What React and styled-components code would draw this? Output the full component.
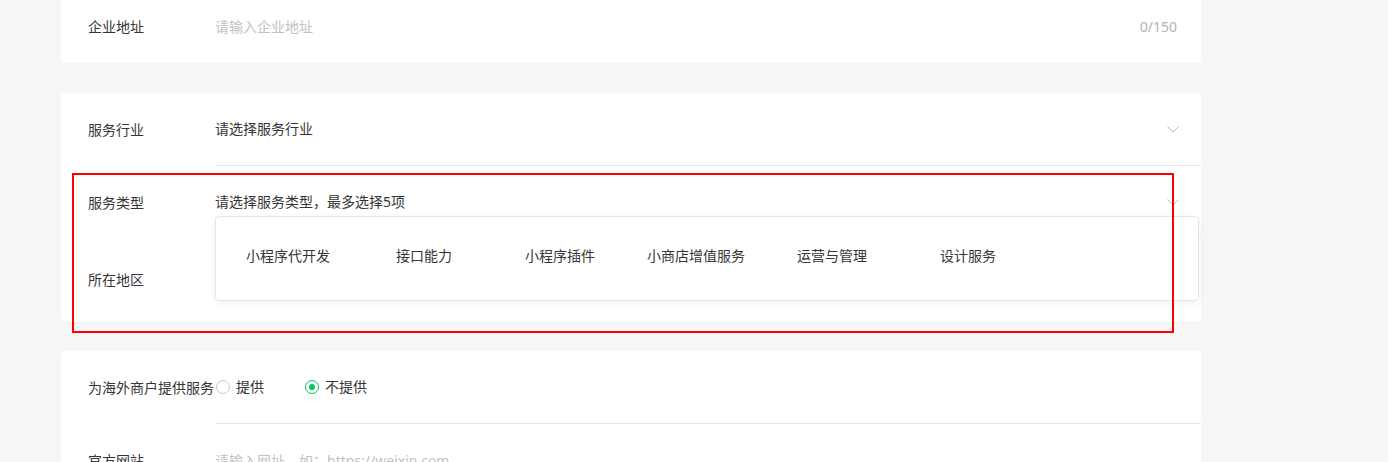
import React from 'react';
import styled, { createGlobalStyle } from 'styled-components';

const GlobalStyle = createGlobalStyle`
    html, body {
        margin: 0;
        padding: 0;
        background-color: #f6f6f6;
        overflow: hidden;
    }
    body {
        font-family: 'Noto Sans', 'Noto Sans CJK SC', sans-serif;
        font-size: 14px;
        color: #353535;
    }
`;

const Page = styled.main`
    position: relative;
    width: 1388px;
    height: 462px;
    padding-left: 61px;
    box-sizing: border-box;
    display: flex;
    flex-direction: column;
    gap: 30px;
    overflow: hidden;
`;

const Card = styled.section`
    width: 1140px;
    background-color: #fff;
    border-radius: 4px;
    margin-top: ${(p) => p.$offset || 0}px;
    flex-shrink: 0;
`;

const Row = styled.div`
    display: flex;
    align-items: stretch;
    padding-left: 27px;
    height: ${(p) => p.$height || 73}px;
`;

const Label = styled.div`
    width: 127px;
    flex-shrink: 0;
    display: flex;
    align-items: center;
    white-space: nowrap;
    line-height: 20px;
    color: #353535;
`;

const Control = styled.div`
    position: relative;
    flex: 1;
    display: flex;
    align-items: center;
    justify-content: space-between;
    padding-right: ${(p) => p.$pr || 22}px;
    border-bottom: ${(p) => (p.$divider ? '1px solid #e5e5e5' : 'none')};
    line-height: 20px;
`;

const Placeholder = styled.span`
    color: #c2c2c2;
`;

const Value = styled.span`
    color: #353535;
`;

const Counter = styled.span`
    color: #b2b2b2;
    margin-right: 2px;
`;

const Chevron = styled.svg`
    width: 12px;
    height: 7px;
    flex-shrink: 0;
`;

const Dropdown = styled.div`
    position: absolute;
    left: 0;
    right: 2px;
    top: 50px;
    height: 85px;
    box-sizing: border-box;
    padding: 0 4px 5px;
    background: #fff;
    border: 1px solid #e6e6e6;
    border-radius: 4px;
    box-shadow: 0 2px 6px rgba(0, 0, 0, 0.06);
    display: flex;
    align-items: center;
    z-index: 5;
`;

const Option = styled.div`
    width: 136px;
    text-align: center;
    color: #353535;
    white-space: nowrap;
`;

const RadioGroup = styled.div`
    display: flex;
    align-items: center;
    gap: 41px;
    padding-left: 1px;
`;

const RadioItem = styled.label`
    display: flex;
    align-items: center;
    gap: 6px;
    color: #353535;
`;

const RadioCircle = styled.span`
    width: 14px;
    height: 14px;
    box-sizing: border-box;
    border-radius: 50%;
    border: 1px solid ${(p) => (p.$checked ? '#07c160' : '#c7c7c7')};
    display: flex;
    align-items: center;
    justify-content: center;
    &::after {
        content: '';
        display: ${(p) => (p.$checked ? 'block' : 'none')};
        width: 6px;
        height: 6px;
        border-radius: 50%;
        background: #07c160;
    }
`;

const Highlight = styled.div`
    position: absolute;
    left: 72px;
    top: 173px;
    width: 1102px;
    height: 160px;
    box-sizing: border-box;
    border: 2px solid #ff0000;
    pointer-events: none;
    z-index: 10;
`;

const ArrowDown = () => (
    <Chevron viewBox="0 0 12 7">
        <polyline
            points="0.5,0.5 6,6 11.5,0.5"
            fill="none"
            stroke="#b8b8b8"
            strokeWidth="1"
        />
    </Chevron>
);

const serviceTypes = [
    '小程序代开发',
    '接口能力',
    '小程序插件',
    '小商店增值服务',
    '运营与管理',
    '设计服务',
];

const App = () => {
    return (
        <>
            <GlobalStyle />
            <Page>
                <Card $offset={-9}>
                    <Row $height={72}>
                        <Label>企业地址</Label>
                        <Control>
                            <Placeholder>请输入企业地址</Placeholder>
                            <Counter>0/150</Counter>
                        </Control>
                    </Row>
                </Card>

                <Card>
                    <Row>
                        <Label>服务行业</Label>
                        <Control $divider>
                            <Value>请选择服务行业</Value>
                            <ArrowDown />
                        </Control>
                    </Row>
                    <Row>
                        <Label>服务类型</Label>
                        <Control $divider>
                            <Value>请选择服务类型，最多选择5项</Value>
                            <ArrowDown />
                            <Dropdown>
                                {serviceTypes.map((t) => (
                                    <Option key={t}>{t}</Option>
                                ))}
                            </Dropdown>
                        </Control>
                    </Row>
                    <Row $height={82}>
                        <Label>所在地区</Label>
                        <Control />
                    </Row>
                </Card>

                <Card>
                    <Row>
                        <Label>为海外商户提供服务</Label>
                        <Control $divider>
                            <RadioGroup>
                                <RadioItem>
                                    <RadioCircle />
                                    提供
                                </RadioItem>
                                <RadioItem>
                                    <RadioCircle $checked />
                                    不提供
                                </RadioItem>
                            </RadioGroup>
                        </Control>
                    </Row>
                    <Row>
                        <Label>官方网站</Label>
                        <Control>
                            <Placeholder>请输入网址，如：https://weixin.com</Placeholder>
                        </Control>
                    </Row>
                </Card>

                <Highlight />
            </Page>
        </>
    );
};

export default App;
